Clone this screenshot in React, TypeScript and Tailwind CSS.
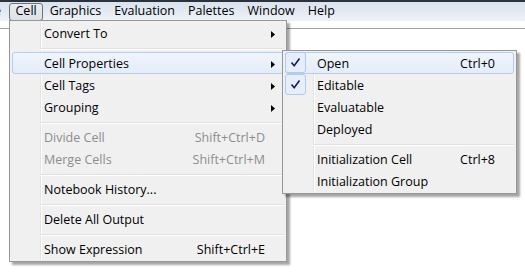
import React from 'react';

type Item =
  | { kind: 'sep' }
  | {
      kind: 'item';
      label: string;
      shortcut?: string;
      submenu?: boolean;
      disabled?: boolean;
      active?: boolean;
      checked?: boolean;
    };

const mainItems: Item[] = [
  { kind: 'item', label: 'Convert To', submenu: true },
  { kind: 'sep' },
  { kind: 'item', label: 'Cell Properties', submenu: true, active: true },
  { kind: 'item', label: 'Cell Tags', submenu: true },
  { kind: 'item', label: 'Grouping', submenu: true },
  { kind: 'sep' },
  { kind: 'item', label: 'Divide Cell', shortcut: 'Shift+Ctrl+D', disabled: true },
  { kind: 'item', label: 'Merge Cells', shortcut: 'Shift+Ctrl+M', disabled: true },
  { kind: 'sep' },
  { kind: 'item', label: 'Notebook History...' },
  { kind: 'sep' },
  { kind: 'item', label: 'Delete All Output' },
  { kind: 'sep' },
  { kind: 'item', label: 'Show Expression', shortcut: 'Shift+Ctrl+E' },
];

const subItems: Item[] = [
  { kind: 'item', label: 'Open', shortcut: 'Ctrl+0', checked: true, active: true },
  { kind: 'item', label: 'Editable', checked: true },
  { kind: 'item', label: 'Evaluatable' },
  { kind: 'item', label: 'Deployed' },
  { kind: 'sep' },
  { kind: 'item', label: 'Initialization Cell', shortcut: 'Ctrl+8' },
  { kind: 'item', label: 'Initialization Group' },
];

const menuBar = ['Cell', 'Graphics', 'Evaluation', 'Palettes', 'Window', 'Help'];

const Check: React.FC = () => (
  <svg width="11" height="11" viewBox="0 0 11 11">
    <path d="M1.5 5.5 L4.2 8.8 L9.5 1.5" fill="none" stroke="#0f1d6b" strokeWidth="1.6" />
  </svg>
);

const Arrow: React.FC = () => (
  <svg width="4" height="7" viewBox="0 0 4 7">
    <path d="M0 0 L4 3.5 L0 7 Z" fill="#000" />
  </svg>
);

const MenuRows: React.FC<{ items: Item[] }> = ({ items }) => (
  <>
    {/* icon gutter line */}
    <div className="absolute left-[28px] top-0 bottom-0 w-[2px] border-l border-[#e2e3e3] bg-white" />
    {items.map((item, i) =>
      item.kind === 'sep' ? (
        <div key={i} className="relative h-[8px] pl-[28px] pt-[4px]">
          <div className="h-[2px] border-t border-[#e0e0e0] bg-white" />
        </div>
      ) : (
        <div
          key={i}
          className={`relative flex h-[22px] items-center pl-[31px] pr-[8px] pt-[2px] ${
            item.active
              ? 'rounded-[3px] border border-[#b5cdee] bg-gradient-to-b from-[#f1f5fb] to-[#e3ecf8]'
              : 'border border-transparent'
          }`}
        >
          {item.checked && (
            <div className="absolute left-[-1px] top-[-1px] flex h-[21px] w-[21px] items-center justify-center rounded-[3px] border border-[#aecbef] bg-[#e6eef9]">
              <Check />
            </div>
          )}
          <span className={`flex-1 ${item.disabled ? 'text-[#8d8d8d]' : 'text-black'}`}>{item.label}</span>
          {item.shortcut && (
            <span className={`mr-[10px] ${item.disabled ? 'text-[#8d8d8d]' : 'text-black'}`}>{item.shortcut}</span>
          )}
          {item.submenu && (
            <span className="flex w-[14px] justify-end">
              <Arrow />
            </span>
          )}
        </div>
      )
    )}
  </>
);

const App: React.FC = () => {
  return (
    <div className="relative h-[274px] w-[525px] overflow-hidden bg-white font-['Open_Sans',sans-serif] text-[12.5px] leading-none text-black">
      {/* Menu bar */}
      <div className="flex h-[21px] items-center border-t-2 border-[#2a323d] bg-gradient-to-b from-[#dae2ee] to-[#eef2f8]">
        <span className="ml-[-6px] w-[15px]">e</span>
        {menuBar.map((m, i) => (
          <div
            key={m}
            className={`flex h-[18px] items-center px-[5.5px] ${
              i === 0 ? 'rounded-[3px] border border-[#6f7378] bg-gradient-to-b from-[#e9ecf0] to-[#dde1e6]' : 'border border-transparent'
            }`}
          >
            {m}
          </div>
        ))}
      </div>
      <div className="h-[7px]" />
      <div className="border-t border-[#a0a0a0]" />

      {/* Cell menu */}
      <div className="absolute left-[9px] top-[20px] w-[278px] border border-[#979797] bg-[#f0f0f0] px-[2px] py-[1px] shadow-[3px_3px_2px_rgba(0,0,0,0.35)]">
        <div className="relative">
          <MenuRows items={mainItems} />
        </div>
      </div>

      {/* Cell Properties submenu */}
      <div className="absolute left-[282px] top-[50px] w-[235px] border border-[#979797] bg-[#f0f0f0] px-[2px] py-[1px] shadow-[3px_3px_2px_rgba(0,0,0,0.35)]">
        <div className="relative">
          <MenuRows items={subItems} />
        </div>
      </div>
    </div>
  );
};

export default App;
